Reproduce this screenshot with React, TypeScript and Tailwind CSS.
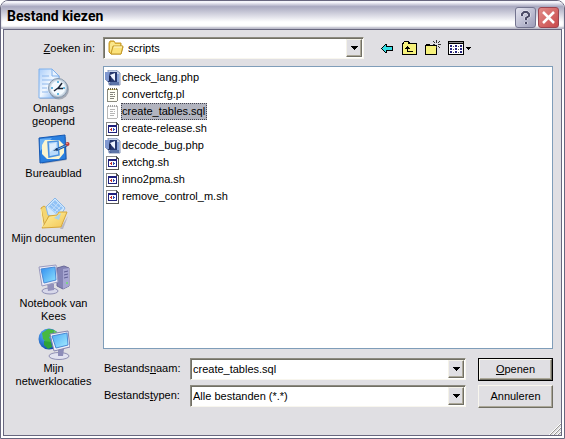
import type { ReactNode } from 'react'

type Place = {
  lines: string[]
  icon: ReactNode
}

type FileKind = 'php' | 'text' | 'script'

type FileEntry = {
  name: string
  kind: FileKind
  selected?: boolean
}

function RecentIcon() {
  return (
    <svg width="32" height="32" viewBox="0 0 32 32">
      <defs>
        <linearGradient id="page" x1="0" y1="0" x2="1" y2="1">
          <stop offset="0" stopColor="#a9cdfa" />
          <stop offset="0.5" stopColor="#f2f8ff" />
          <stop offset="1" stopColor="#6fa8ee" />
        </linearGradient>
      </defs>
      <path d="M2 31h16l4-2V8l-2-1v22H2z" fill="#8d93a8" opacity="0.5" />
      <path d="M1 1h13l7 7v22H1z" fill="url(#page)" stroke="#7fb0ec" />
      <path d="M14 1v7h7z" fill="#e8f2ff" stroke="#7fb0ec" />
      <path d="M4 8h7M4 12h13M4 16h7M4 20h5M4 24h6" stroke="#8fb8ec" />
      <circle cx="21" cy="21.500" r="10" fill="#7f8796" opacity="0.6" />
      <circle cx="20" cy="20" r="9.500" fill="#c3d0dd" stroke="#8496aa" />
      <circle cx="20" cy="20" r="7.500" fill="#f4faff" stroke="#d9e4ee" />
      <path d="M20 13v2M20 25v2M13 20h2M25 20h2" stroke="#38a3d6" strokeWidth="1.500" />
      <path d="M24 15l-4 5.500h5M20 20l-4 3" stroke="#1b2536" strokeWidth="1.500" fill="none" />
    </svg>
  )
}

function DesktopIcon() {
  return (
    <svg width="32" height="32" viewBox="0 0 32 32">
      <path d="M3 6L28 4L29 27L4 31z" fill="#7f8aa0" opacity="0.6" />
      <path d="M1 5L27 2L28 26L2 30z" fill="#2a80e0" stroke="#1659b4" />
      <path d="M2 6L14 5L7 13L2 18z" fill="#6cb2f6" />
      <path d="M7 7h14l5 5v8l-5 6H9l-5-5v-9z" fill="#fbf5cf" />
      <path d="M10 9l10-1l1 14l-10 2z" fill="#b9dbfb" stroke="#4a92e0" strokeWidth="1.500" />
      <path d="M12 11l6-1v4l-6 5z" fill="#fff" opacity="0.5" />
      <path d="M18 17l11-5" stroke="#1d4f94" strokeWidth="2.500" />
      <path d="M18 17l11-5" stroke="#69aef2" />
      <path d="M15 18l4-3l1 2z" fill="#14335c" />
      <circle cx="29.500" cy="11" r="2" fill="#b83a3a" />
      <circle cx="29" cy="10.500" r="0.800" fill="#f2a08f" />
    </svg>
  )
}

function DocumentsIcon() {
  return (
    <svg width="32" height="32" viewBox="0 0 32 32">
      <defs>
        <linearGradient id="docs" x1="0" y1="0" x2="1" y2="1">
          <stop offset="0" stopColor="#fff3a4" />
          <stop offset="1" stopColor="#f3c552" />
        </linearGradient>
      </defs>
      <path d="M5 31l17 0l8-13l-5 13z" fill="#77788c" opacity="0.4" />
      <path d="M3 10l3-2l4 3l1 6l-4 13z" fill="#f4d672" stroke="#d3a63c" />
      <path d="M8 9L17 0l10 10l-6 10l-11-3z" fill="#d2e9fd" stroke="#86b6ea" />
      <path d="M10 9l7-7l8 8l-7 6z" fill="#90c1f5" />
      <path d="M11 9l7 6M13 7l7 6M15 5l7 6M14 12l6-7M17 14l6-6" stroke="#d5e9fd" strokeWidth="0.700" />
      <path d="M4 30l7-12l8-1l2-3l8 0l-6 15z" fill="url(#docs)" stroke="#d5a63a" />
      <path d="M16 20l7-5l-2 7z" fill="#a3d2f4" opacity="0.9" />
      <path d="M3 11l2 18" stroke="#fff2b0" />
    </svg>
  )
}

function ComputerIcon() {
  return (
    <svg width="32" height="32" viewBox="0 0 32 32">
      <defs>
        <linearGradient id="screen" x1="0" y1="0" x2="1" y2="1">
          <stop offset="0" stopColor="#2f8df0" />
          <stop offset="1" stopColor="#93e4fd" />
        </linearGradient>
      </defs>
      <path d="M19 5l7-2l5 2v18l-6 3l-6-3z" fill="#8483b4" stroke="#6a6999" />
      <path d="M25 6l6-1v18l-6 3z" fill="#a7a6d2" />
      <path d="M26 9l4-1M26 12l4-1M26 15l4-1" stroke="#605f94" />
      <circle cx="29" cy="20" r="1" fill="#6ce06a" />
      <ellipse cx="12" cy="28" rx="8" ry="3" fill="#d8d8ea" stroke="#8f8fb4" />
      <path d="M9 20l7 1v6l-6 1z" fill="#9291bb" />
      <path d="M1 4L18 2L20 19L4 23z" fill="#ececf7" stroke="#9a9abf" />
      <path d="M3 6L17 4L18 17L6 20z" fill="url(#screen)" stroke="#4a8ad6" />
    </svg>
  )
}

function NetworkIcon() {
  return (
    <svg width="32" height="32" viewBox="0 0 32 32">
      <defs>
        <radialGradient id="globe" cx="0.35" cy="0.3" r="0.8">
          <stop offset="0" stopColor="#59b6ff" />
          <stop offset="1" stopColor="#0a3fa5" />
        </radialGradient>
        <linearGradient id="netscreen" x1="0" y1="0" x2="1" y2="1">
          <stop offset="0" stopColor="#4ba9f5" />
          <stop offset="1" stopColor="#a5ecff" />
        </linearGradient>
      </defs>
      <circle cx="11" cy="11" r="10.500" fill="url(#globe)" />
      <path d="M4 5l6-4l6 1l-1 5l-4 2l2 5l-4 1l-4-4z" fill="#47b93f" />
      <path d="M6 13l7 1l1 5l-4 2l-4-4z" fill="#2fa33a" />
      <path d="M16 2l4 3l-4 1z" fill="#6bd050" />
      <ellipse cx="21" cy="28" rx="10" ry="3.500" fill="#e2e2f0" stroke="#8f8fb4" />
      <path d="M20 20l6 1l-1 7h-5z" fill="#8d8cb8" />
      <path d="M12 6L30 3L32 19L16 23z" fill="#eeeef8" stroke="#8585ae" />
      <path d="M14 8L29 5L30 17L18 20z" fill="url(#netscreen)" stroke="#4a8ad6" />
    </svg>
  )
}

function FolderIcon() {
  return (
    <svg width="16" height="16" viewBox="0 0 16 16" className="shrink-0">
      <path d="M1 3l1-2h4l1 2h6v3l2 1l-2 7H3L1 12z" fill="#e9bf3f" stroke="#c79a2a" />
      <path d="M2 13V4l1-2h3l1 2h5v3H5z" fill="#fbe78b" />
      <path d="M5 6h10l-2 8H3z" fill="#fbe27a" stroke="#c49a2b" />
      <path d="M6 7h8" stroke="#fff8cf" />
    </svg>
  )
}

function FileIcon({ kind }: { kind: FileKind }) {
  if (kind === 'php') {
    return (
      <svg width="16" height="16" viewBox="0 0 16 16" className="shrink-0">
        <path d="M3 0h8l4 3v12H4z" fill="#c9d6ec" stroke="#8494b8" />
        <path d="M5 12h9v3H5z" fill="#5c74a8" />
        <path d="M0 2h12v10H3L0 9z" fill="#26386f" />
        <path d="M0 2h5l-1 4l1 5H2L0 9z" fill="#7f97cf" />
        <path d="M5 5l5-2v8l-3-3z" fill="#eef4ff" />
        <path d="M4 6h2v5H4z" fill="#1b2756" />
        <path d="M12 4h2v8h-2z" fill="#8ba6da" />
        <path d="M3 12l4 3H5z" fill="#465c95" />
      </svg>
    )
  }

  if (kind === 'text') {
    return (
      <svg width="16" height="16" viewBox="0 0 16 16" className="shrink-0" shapeRendering="crispEdges">
        <path d="M2 2h11v12h-1v1H2z" fill="#fffff4" />
        <path d="M2 2h1v12H2zM12 2h1v12h-1zM2 14h10v1H2z" fill="#8b8b80" />
        <path d="M3 1h1v2H3zM5 1h1v2H5zM7 1h1v2H7zM9 1h1v2H9zM11 1h1v2h-1z" fill="#6c6548" />
        <path d="M4 2h1v1H4zM6 2h1v1H6zM8 2h1v1H8zM10 2h1v1h-1z" fill="#d9c56f" />
        <path d="M5 5h5v1H5zM5 7h3v1H5zM9 7h1v1H9zM5 9h5v1H5zM5 11h4v1H5z" fill="#85857c" />
      </svg>
    )
  }

  return (
    <svg width="16" height="16" viewBox="0 0 16 16" className="shrink-0" shapeRendering="crispEdges">
      <path d="M1 1h10l3 3v11H1z" fill="#fff" />
      <path d="M1 1h10v1H2v12H1z" fill="#8a8a8a" />
      <path d="M11 1h1v1h1v1h1v12H1v-1h12V4h-2z" fill="#555" />
      <path d="M3 4h9v8H3z" fill="#20207c" />
      <path d="M4 6h7v5H4z" fill="#fff" />
      <path d="M5 8h1v1H5zM6 7h1v3H6z" fill="#c03030" />
      <path d="M8 7h1v3H8zM9 8h1v1H9z" fill="#2f52b8" />
    </svg>
  )
}

function BackIcon() {
  return (
    <svg width="16" height="16" viewBox="0 0 16 16" shapeRendering="crispEdges">
      <path d="M2 8h1V7h1V6h1V5h1V4h2v2h6v5H8v2H6v-1H5v-1H4v-1H3V9H2z" fill="#000" />
      <path d="M3 8h1V7h1V6h1V5h1v2h6v3H7v2H6v-1H5v-1H4V9H3z" fill="#35dfe5" />
    </svg>
  )
}

function UpIcon() {
  return (
    <svg width="16" height="16" viewBox="0 0 16 16" shapeRendering="crispEdges">
      <path d="M0 3h1V2h1V1h5v1h1v1h7v12H0z" fill="#000" />
      <path d="M1 4h1V2h4v2h8v10H1z" fill="#f6f17c" />
      <path d="M5 6h1v1h1v1h1v1H6v2h5v1H5V9H3V8h1V7h1z" fill="#000" />
    </svg>
  )
}

function NewFolderIcon() {
  return (
    <svg width="16" height="16" viewBox="0 0 16 16" shapeRendering="crispEdges">
      <path d="M0 5h1V4h4v1h7v10H0z" fill="#000" />
      <path d="M1 6h10v8H1z" fill="#f6f17c" />
      <path d="M11 0h1v3h-1zM11 6h1v2h-1zM8 1h1v1H8zM9 2h1v1H9zM14 1h1v1h-1zM13 2h1v1h-1zM8 4h2v1H8zM13 4h3v1h-3zM13 6h1v1h-1zM14 7h1v1h-1z" fill="#333" />
    </svg>
  )
}

function ViewIcon() {
  return (
    <svg width="24" height="16" viewBox="0 0 24 16" shapeRendering="crispEdges">
      <path d="M0 1h16v14H0z" fill="#000" />
      <path d="M1 2h14v1H1z" fill="#8b8b8b" />
      <path d="M1 4h14v10H1z" fill="#fff" />
      <path d="M2 5h2v2H2zM7 5h2v2H7zM12 5h2v2h-2zM2 8h2v2H2zM7 8h2v2H7zM12 8h2v2h-2zM2 11h2v2H2zM7 11h2v2H7zM12 11h2v2h-2z" fill="#24247c" />
      <path d="M5 6h1v1H5zM10 6h1v1h-1zM5 9h1v1H5zM10 9h1v1h-1zM5 12h1v1H5zM10 12h1v1h-1z" fill="#555" />
      <path d="M18 7h5v1h-1v1h-1v1h-1V9h-1V8h-1z" fill="#000" />
    </svg>
  )
}

function DropArrow() {
  return (
    <span className="pointer-events-none flex h-[18px] w-4 shrink-0 items-center justify-center border border-t-[#f4f2e8] border-r-[#716f64] border-b-[#716f64] border-l-[#f4f2e8] bg-[#e0dfe3] shadow-[inset_-1px_-1px_0_#aca899]">
      <svg width="7" height="4" viewBox="0 0 7 4" shapeRendering="crispEdges">
        <path d="M0 0h7v1H6v1H5v1H4v1H3V3H2V2H1V1H0z" fill="#000" />
      </svg>
    </span>
  )
}

const places: Place[] = [
  { lines: ['Onlangs', 'geopend'], icon: <RecentIcon /> },
  { lines: ['Bureaublad'], icon: <DesktopIcon /> },
  { lines: ['Mijn documenten'], icon: <DocumentsIcon /> },
  { lines: ['Notebook van', 'Kees'], icon: <ComputerIcon /> },
  { lines: ['Mijn', 'netwerklocaties'], icon: <NetworkIcon /> },
]

const files: FileEntry[] = [
  { name: 'check_lang.php', kind: 'php' },
  { name: 'convertcfg.pl', kind: 'text' },
  { name: 'create_tables.sql', kind: 'text', selected: true },
  { name: 'create-release.sh', kind: 'script' },
  { name: 'decode_bug.php', kind: 'php' },
  { name: 'extchg.sh', kind: 'script' },
  { name: 'inno2pma.sh', kind: 'script' },
  { name: 'remove_control_m.sh', kind: 'script' },
]

const field =
  'flex h-[22px] min-w-0 items-center border border-t-[#8c8a80] border-r-[#f8f6ee] border-b-[#f8f6ee] border-l-[#8c8a80] bg-white pr-px shadow-[inset_1px_1px_0_#716f64]'

const pushButton =
  'border border-t-[#f8f6ee] border-r-[#716f64] border-b-[#716f64] border-l-[#f8f6ee] bg-[#e0dfe3] shadow-[inset_-1px_-1px_0_#aca899]'

export default function App() {
  return (
    <main className="flex min-h-screen flex-col overflow-hidden rounded-t-lg border border-[#68677f] bg-white px-[2px] pb-[2px] font-['Liberation_Sans',Arial,sans-serif] text-[11px] leading-[13px] text-black">
      <header className="-mx-[2px] flex h-7 items-center bg-linear-to-b from-[#f4f4fa] from-5% via-[#a9a9c0] via-20% to-white to-75% pr-[5px] pl-[6px] shadow-[inset_0_-2px_2px_#b9b9c8]">
        <h1 className="flex-1 pt-[2px] font-['Roboto','Noto_Sans',sans-serif] text-[14px] leading-4 font-bold">
          Bestand kiezen
        </h1>

        <div className="flex gap-[2px] pt-1">
          <button
            aria-label="Help"
            className="flex size-[21px] items-center justify-center rounded-[3px] border border-[#73748f] bg-linear-to-br from-[#e4e4ef] to-[#9c9db9]"
          >
            <svg width="13" height="15" viewBox="0 0 13 15" fill="none">
              <path d="M3 6V4l2-2h3l2 2v2L7 8v2M7 12v2" stroke="#fff" strokeWidth="3" opacity="0.7" />
              <path d="M3 6V4l2-2h3l2 2v2L7 8v2M7 12v2" stroke="#4a4a66" strokeWidth="2" />
            </svg>
          </button>
          <button
            aria-label="Sluiten"
            className="flex size-[21px] items-center justify-center rounded-[3px] border border-[#9c4550] bg-linear-to-br from-[#e08a88] to-[#c9484b]"
          >
            <svg width="15" height="15" viewBox="0 0 15 15" fill="none">
              <path d="M2 2l11 11M13 2L2 13" stroke="#fff" strokeWidth="2.500" />
            </svg>
          </button>
        </div>
      </header>

      <div className="relative grid flex-1 grid-cols-[99px_minmax(0,1fr)] grid-rows-[auto_1fr_auto] border border-[#68677f] bg-[#e0dfe3] pt-[7px] pr-2">
        <label htmlFor="folder" className="flex h-[22px] items-center justify-end pr-2">
          <span>
            <u>Z</u>oeken in:
          </span>
        </label>

        <div className="flex items-center">
          <div className={`${field} w-[261px] pl-1`}>
            <FolderIcon />
            <select id="folder" className="min-w-0 flex-1 appearance-none pl-1 outline-none">
              <option>scripts</option>
            </select>
            <DropArrow />
          </div>

          <div className="ml-[15px] flex gap-[7px]">
            <button aria-label="Vorige map">
              <BackIcon />
            </button>
            <button aria-label="Bovenliggende map">
              <UpIcon />
            </button>
            <button aria-label="Nieuwe map">
              <NewFolderIcon />
            </button>
            <button aria-label="Weergave">
              <ViewIcon />
            </button>
          </div>
        </div>

        <nav className="row-span-2 pt-[9px]">
          {places.map((place) => (
            <button
              key={place.lines[0]}
              className="flex h-[65px] w-full flex-col items-center gap-[2px]"
            >
              {place.icon}
              <span className="text-center whitespace-pre">{place.lines.join('\n')}</span>
            </button>
          ))}
        </nav>

        <ul className="mt-[7px] border border-[#7f9db9] bg-white py-[2px] pl-px">
          {files.map((file) => (
            <li key={file.name}>
              <button className="flex h-[17px] items-center">
                <span className={file.selected ? 'opacity-60 grayscale' : ''}>
                  <FileIcon kind={file.kind} />
                </span>
                <span
                  className={
                    file.selected
                      ? 'border border-dotted border-[#44444f] bg-[#b2b4bf] py-px pr-px'
                      : 'px-px'
                  }
                >
                  {file.name}
                </span>
              </button>
            </li>
          ))}
        </ul>

        <form
          className="col-start-2 grid grid-cols-[87px_minmax(0,1fr)_75px] gap-y-1 pt-[9px] pb-[27px]"
          onSubmit={(event) => event.preventDefault()}
        >
          <label htmlFor="filename" className="pt-1 pl-px">
            Bestands<u>n</u>aam:
          </label>
          <div className={`${field} mr-3 pl-[2px]`}>
            <input
              id="filename"
              defaultValue="create_tables.sql"
              className="min-w-0 flex-1 outline-none"
            />
            <DropArrow />
          </div>
          <div className="flex h-[23px] border border-black">
            <button className={`flex-1 ${pushButton}`}>
              <u>O</u>penen
            </button>
          </div>

          <label htmlFor="filetype" className="pt-1 pl-px">
            Bestands<u>t</u>ypen:
          </label>
          <div className={`${field} mr-3 pl-[2px]`}>
            <select id="filetype" className="min-w-0 flex-1 appearance-none outline-none">
              <option>Alle bestanden (*.*)</option>
            </select>
            <DropArrow />
          </div>
          <button type="button" className={`h-[23px] ${pushButton}`}>
            Annuleren
          </button>
        </form>

        <svg width="12" height="12" viewBox="0 0 12 12" className="absolute right-0 bottom-0">
          <path d="M0 12L12 0M4 12l8-8M8 12l4-4" stroke="#fff" />
          <path d="M1 12L12 1M5 12l7-7M9 12l3-3" stroke="#9b9a94" />
        </svg>
      </div>
    </main>
  )
}
